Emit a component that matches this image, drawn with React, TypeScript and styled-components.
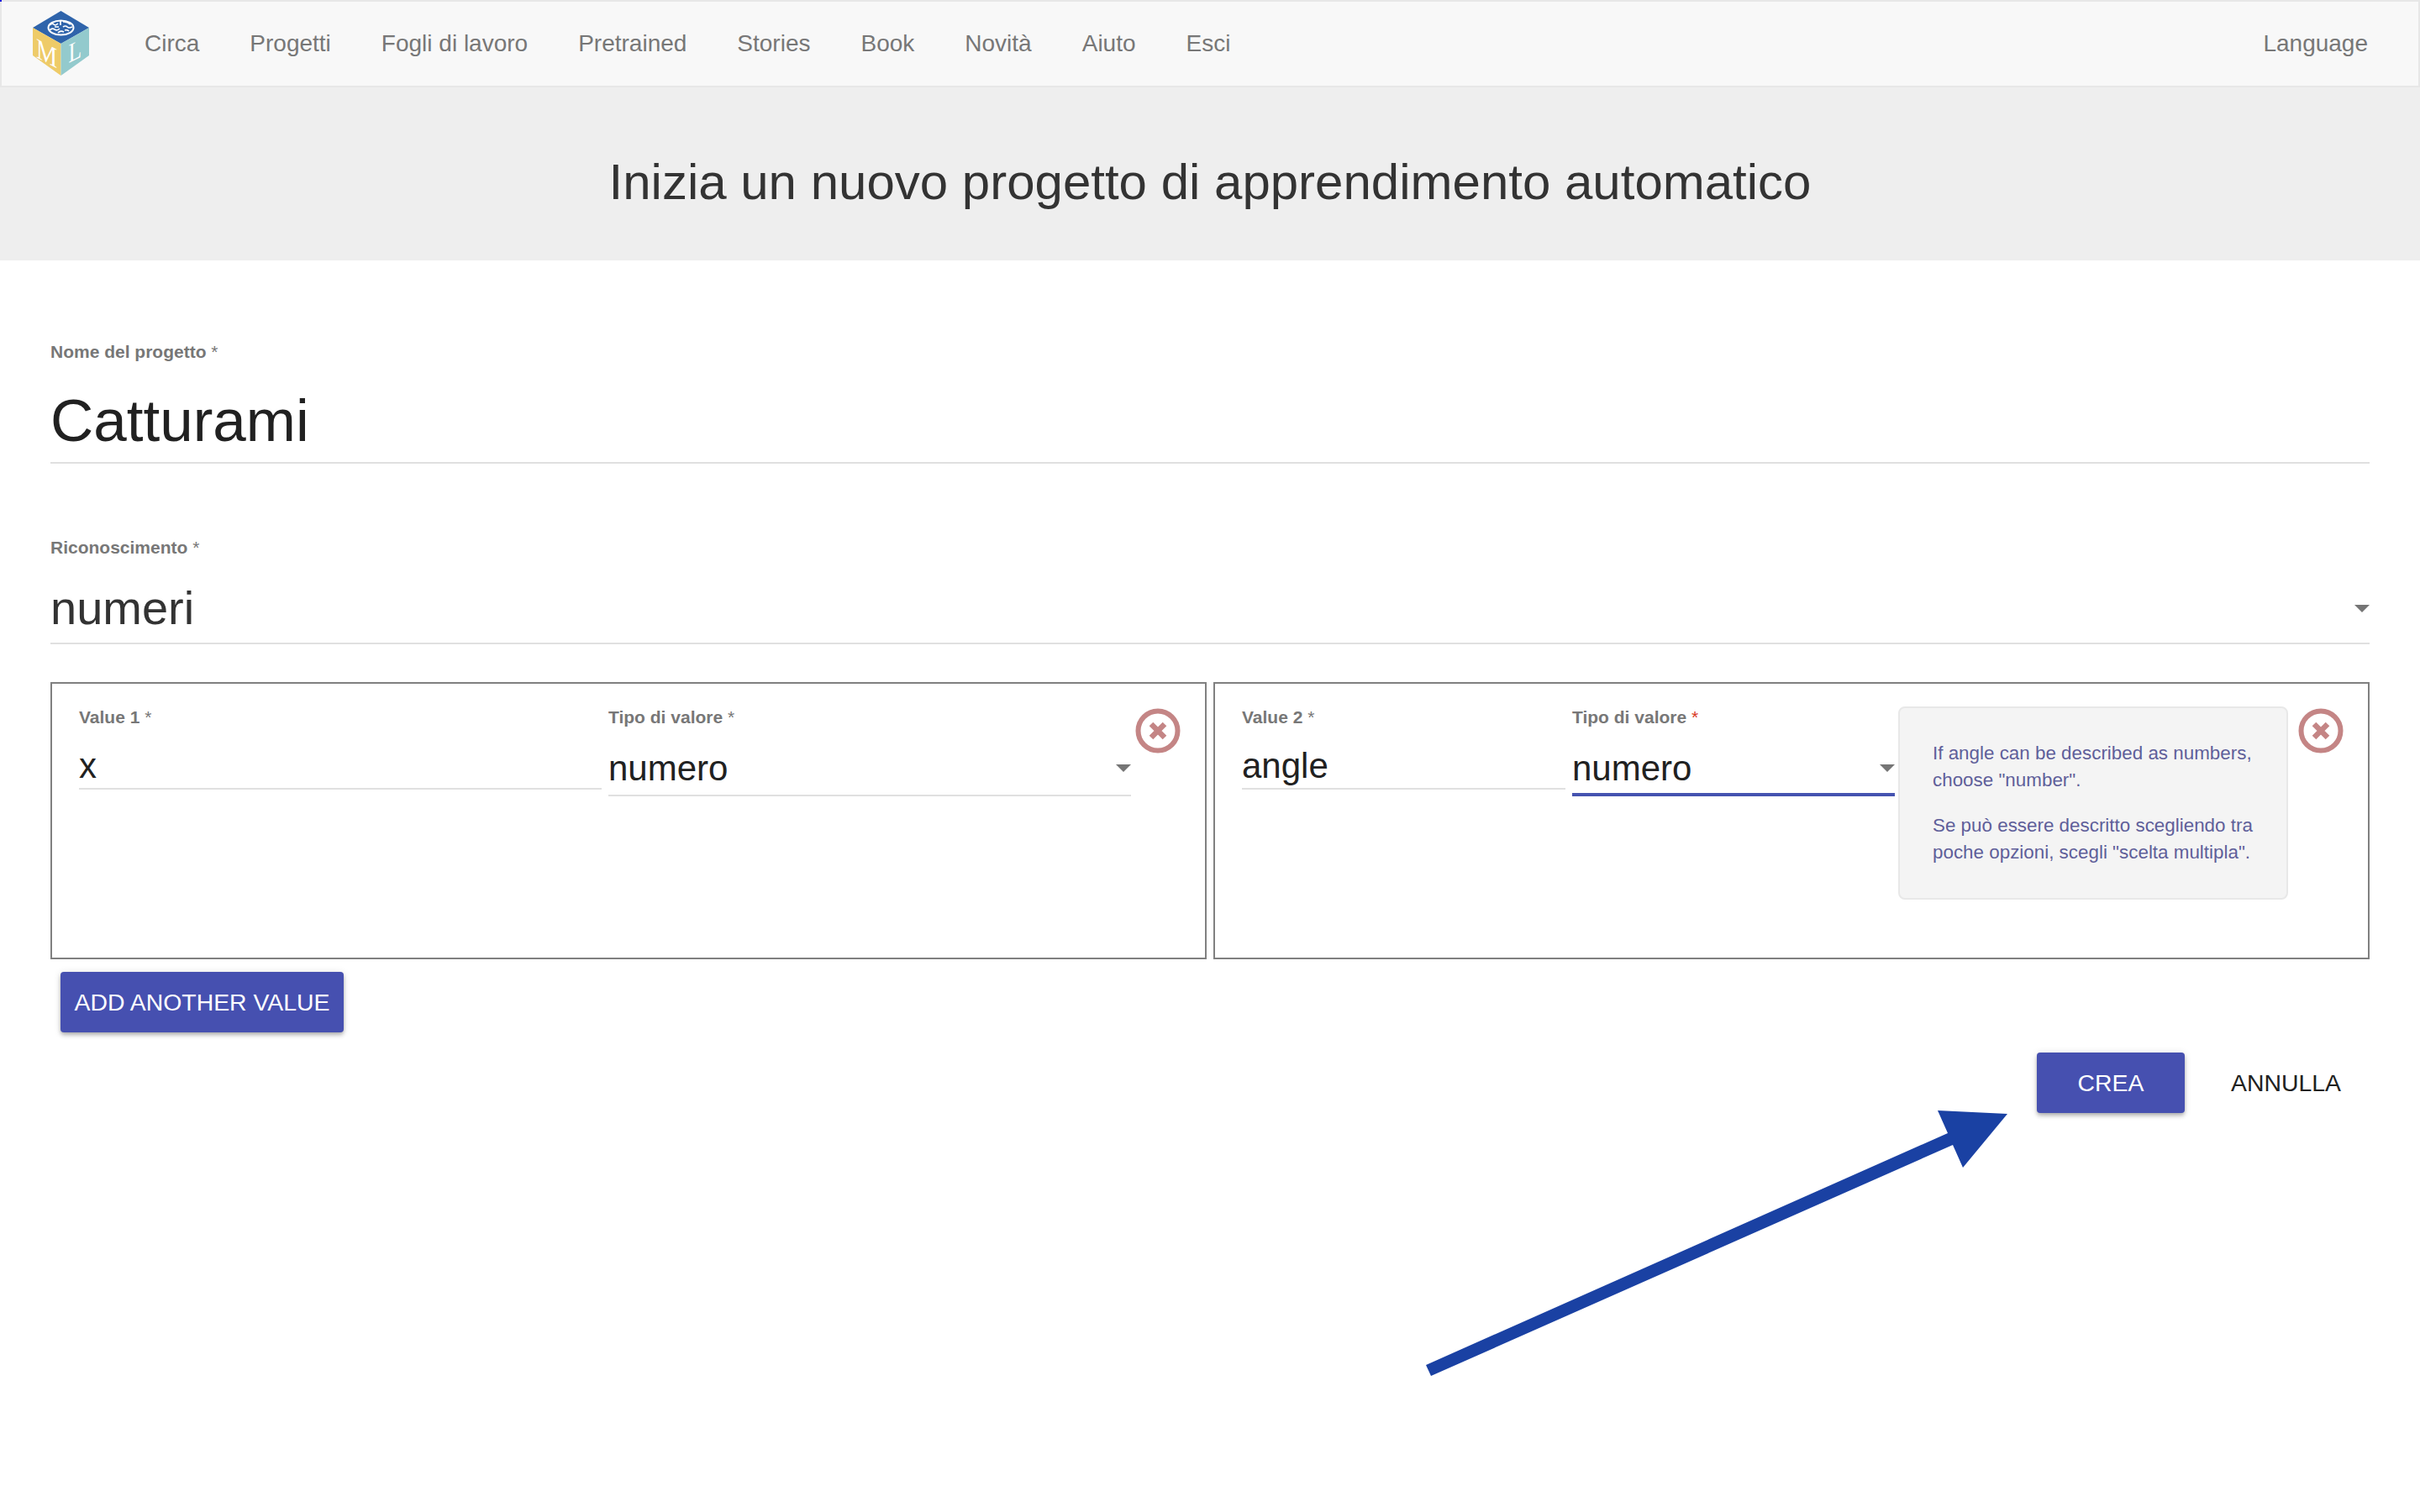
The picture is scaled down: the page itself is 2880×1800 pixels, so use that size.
import * as React from 'react';
import styled, { createGlobalStyle } from 'styled-components';

const GlobalStyle = createGlobalStyle`
  html, body {
    margin: 0;
    padding: 0;
    background: #fff;
    font-family: "Liberation Sans", Arial, sans-serif;
  }
`;

const Page = styled.div`
  position: relative;
  width: 2880px;
  height: 1800px;
  overflow: hidden;
  background: #fff;
`;

const Corner = styled.span`
  position: absolute;
  left: 0;
  top: 0;
  width: 2px;
  height: 2px;
  background: #1a1ae0;
`;

const Navbar = styled.nav`
  box-sizing: border-box;
  height: 104px;
  display: flex;
  align-items: center;
  padding-left: 37px;
  padding-right: 60px;
  background: #f8f8f8;
  border: 2px solid #e7e7e7;
`;

const Logo = styled.svg`
  width: 67px;
  height: 78px;
  flex: none;
  margin-right: 36px;
`;

const NavLink = styled.a`
  padding: 0 30px;
  font-size: 28px;
  line-height: 40px;
  color: #777;
  white-space: nowrap;
`;

const NavRight = styled(NavLink)`
  margin-left: auto;
  padding: 0;
`;

const Banner = styled.header`
  box-sizing: border-box;
  height: 206px;
  padding-top: 18px;
  display: flex;
  align-items: center;
  justify-content: center;
  background: #eee;
`;

const Title = styled.h1`
  margin: 0;
  font-size: 60px;
  font-weight: 400;
  color: #333;
`;

const Form = styled.form`
  padding: 0 60px;
`;

const Field = styled.div<{ $top: number; $height: number }>`
  box-sizing: border-box;
  position: relative;
  margin-top: ${p => p.$top}px;
  height: ${p => p.$height}px;
  border-bottom: 2px solid #e0e0e0;
`;

const Label = styled.label`
  display: block;
  font-size: 21px;
  line-height: 24px;
  font-weight: 700;
  color: #777;
  white-space: nowrap;
`;

const Star = styled.span<{ $red?: boolean }>`
  font-weight: 400;
  color: ${p => (p.$red ? '#d9391f' : '#777')};
`;

const BigValue = styled.div`
  margin-top: 30px;
  font-size: 71px;
  line-height: 80px;
  color: #212121;
`;

const SelectValue = styled.div`
  margin-top: 28px;
  font-size: 56px;
  line-height: 64px;
  color: #333;
`;

const Caret = styled.span<{ $bottom: number }>`
  position: absolute;
  right: 0;
  bottom: ${p => p.$bottom}px;
  width: 0;
  height: 0;
  border-left: 9px solid transparent;
  border-right: 9px solid transparent;
  border-top: 9px solid #757575;
`;

const Values = styled.div`
  display: grid;
  grid-template-columns: 1376px 1376px;
  gap: 8px;
  margin-top: 45px;
`;

const ValueBox = styled.section`
  box-sizing: border-box;
  height: 330px;
  display: flex;
  align-items: flex-start;
  padding: 28px 30px 0 32px;
  border: 2px solid #808080;
`;

const Cell = styled.div<{ $width: number; $height: number; $gap?: number; $focus?: boolean }>`
  box-sizing: border-box;
  position: relative;
  flex: none;
  width: ${p => p.$width}px;
  height: ${p => p.$height}px;
  margin-right: ${p => p.$gap ?? 8}px;
  border-bottom: ${p => (p.$focus ? '4px solid #4553b0' : '2px solid #e0e0e0')};
`;

const CellValue = styled.div<{ $select?: boolean }>`
  margin-top: ${p => (p.$select ? '25px' : '22px')};
  font-size: 42px;
  line-height: 48px;
  color: #212121;
`;

const Hint = styled.aside`
  box-sizing: border-box;
  flex: none;
  width: 464px;
  height: 230px;
  margin: -1px 12px 0 -4px;
  padding: 38px 39px 0;
  background: #f4f4f4;
  border: 2px solid #e8e8e8;
  border-radius: 8px;
  font-size: 22.4px;
  line-height: 32px;
  color: #5f5f9a;
`;

const HintText = styled.p`
  margin: 0 0 22px;
`;

const RemoveIcon = styled.svg`
  flex: none;
  width: 54px;
  height: 54px;
  margin-top: 1px;
`;

const Button = styled.button`
  box-sizing: border-box;
  height: 72px;
  padding: 0;
  border: 0;
  border-radius: 4px;
  background: #4650b0;
  color: #fff;
  font: 400 28.4px "Liberation Sans", Arial, sans-serif;
  white-space: nowrap;
  box-shadow: 0 2px 4px -1px rgba(0, 0, 0, 0.2), 0 4px 5px rgba(0, 0, 0, 0.14), 0 1px 10px rgba(0, 0, 0, 0.12);
`;

const AddButton = styled(Button)`
  display: block;
  width: 337px;
  margin: 15px 0 0 12px;
`;

const Actions = styled.div`
  display: flex;
  align-items: center;
  justify-content: flex-end;
  margin-top: 24px;
  padding-right: 34px;
`;

const CreateButton = styled(Button)`
  width: 176px;
`;

const CancelLink = styled.span`
  margin-left: 55px;
  font-size: 28.4px;
  color: #212121;
`;

const Arrow = styled.svg`
  position: absolute;
  left: 0;
  top: 0;
  width: 2880px;
  height: 1800px;
  pointer-events: none;
`;

const navItems = ['Circa', 'Progetti', 'Fogli di lavoro', 'Pretrained', 'Stories', 'Book', 'Novità', 'Aiuto', 'Esci'];

function Remove() {
  return (
    <RemoveIcon viewBox="0 0 54 54">
      <circle cx="27" cy="27" r="23.5" fill="none" stroke="#c48585" strokeWidth="6" />
      <path d="M19 19 L35 35 M35 19 L19 35" stroke="#c48585" strokeWidth="6.5" />
    </RemoveIcon>
  );
}

function CubeLogo() {
  return (
    <Logo viewBox="0 0 67 78">
      <polygon points="33.5,0 67,20 33.5,39 0,20" fill="#2f64ab" />
      <polygon points="0,20 33.5,39 33.5,77 0,53" fill="#eecb68" />
      <polygon points="33.5,39 67,20 67,53 33.5,77" fill="#93cacd" />
      <ellipse cx="33.5" cy="20" rx="15" ry="8.5" fill="none" stroke="#fff" strokeWidth="2" />
      <path
        d="M20 17 q3 -3 5 -1 t5 -1 M36 13 q4 -1 9 3 M20 23 q3 -3 6 -1 t6 -1 M36 19 q3 -2 5 0 t6 0 M33 11 v6 M30 26 q3 -3 7 -1 M26 19 h5 M38 23 q3 -1 5 1"
        fill="none"
        stroke="#fff"
        strokeWidth="1.7"
      />
      <text
        transform="translate(4 55) skewY(28) scale(.83 1)"
        fontFamily="Liberation Serif, serif"
        fontSize="34"
        fill="#fff"
      >
        M
      </text>
      <text
        transform="translate(42.6 62) skewY(-26) scale(.8 1)"
        fontFamily="Liberation Serif, serif"
        fontSize="32"
        fill="#fff"
      >
        L
      </text>
    </Logo>
  );
}

export default function App() {
  return (
    <Page>
      <GlobalStyle />
      <Corner />
      <Navbar>
        <CubeLogo />
        {navItems.map(item => (
          <NavLink key={item}>{item}</NavLink>
        ))}
        <NavRight>Language</NavRight>
      </Navbar>
      <Banner>
        <Title>Inizia un nuovo progetto di apprendimento automatico</Title>
      </Banner>
      <Form>
        <Field $top={97} $height={145}>
          <Label>
            Nome del progetto <Star>*</Star>
          </Label>
          <BigValue>Catturami</BigValue>
        </Field>
        <Field $top={88} $height={127}>
          <Label>
            Riconoscimento <Star>*</Star>
          </Label>
          <SelectValue>numeri</SelectValue>
          <Caret $bottom={36} />
        </Field>
        <Values>
          <ValueBox>
            <Cell $width={622} $height={98}>
              <Label>
                Value 1 <Star>*</Star>
              </Label>
              <CellValue>x</CellValue>
            </Cell>
            <Cell $width={622} $height={106} $gap={5}>
              <Label>
                Tipo di valore <Star>*</Star>
              </Label>
              <CellValue $select>numero</CellValue>
              <Caret $bottom={27} />
            </Cell>
            <Remove />
          </ValueBox>
          <ValueBox>
            <Cell $width={385} $height={98}>
              <Label>
                Value 2 <Star>*</Star>
              </Label>
              <CellValue>angle</CellValue>
            </Cell>
            <Cell $width={384} $height={106} $focus>
              <Label>
                Tipo di valore <Star $red>*</Star>
              </Label>
              <CellValue $select>numero</CellValue>
              <Caret $bottom={25} />
            </Cell>
            <Hint>
              <HintText>If angle can be described as numbers, choose "number".</HintText>
              <HintText>Se può essere descritto scegliendo tra poche opzioni, scegli "scelta multipla".</HintText>
            </Hint>
            <Remove />
          </ValueBox>
        </Values>
        <AddButton type="button">ADD ANOTHER VALUE</AddButton>
        <Actions>
          <CreateButton type="button">CREA</CreateButton>
          <CancelLink>ANNULLA</CancelLink>
        </Actions>
      </Form>
      <Arrow viewBox="0 0 2880 1800">
        <polygon
          points="1697,1625 2318,1349 2306,1322 2389,1326 2336,1390 2324,1363 1703,1638"
          fill="#1a41a3"
        />
      </Arrow>
    </Page>
  );
}
